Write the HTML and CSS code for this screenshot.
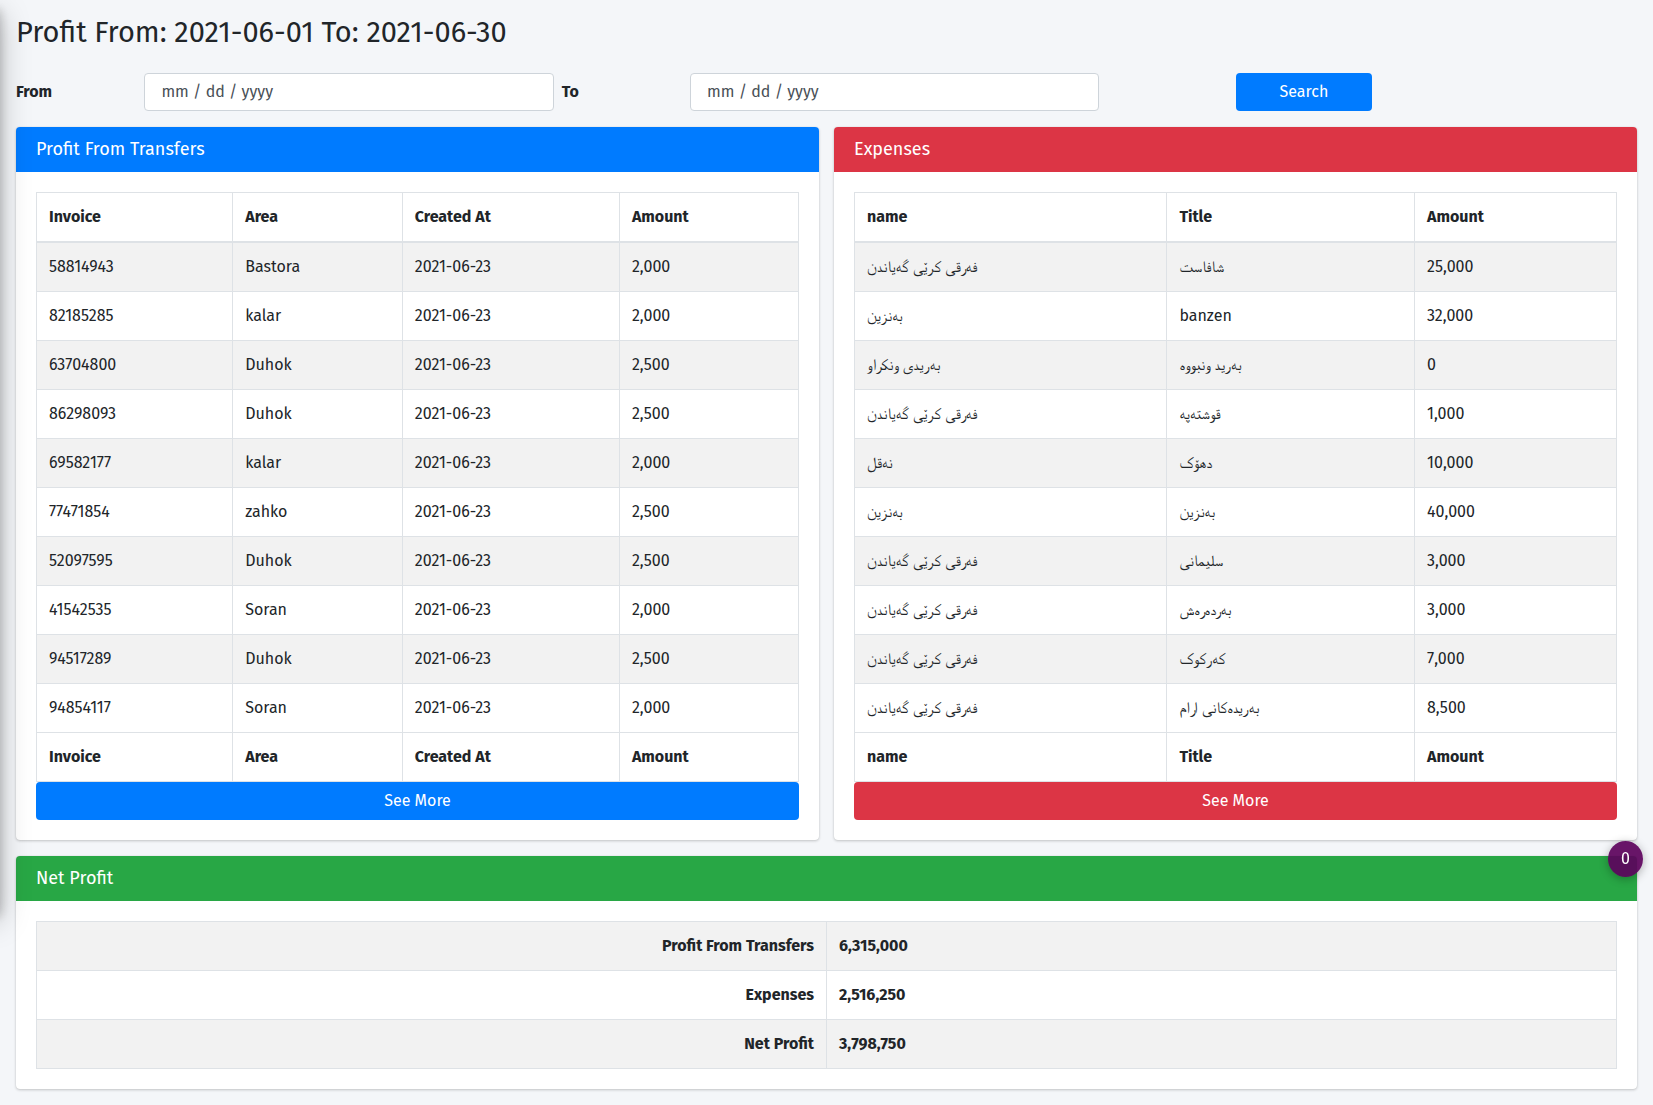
FILE: index.html
```html
<!DOCTYPE html>
<html lang="en">
<head>
  <meta charset="utf-8">
  <meta name="viewport" content="width=device-width, initial-scale=1">
  <title>Profit</title>
  <link rel="stylesheet" href="styles.css">
</head>
<body>
  <aside class="sidebar"></aside>
  <main class="content">
    <h1 class="page-title">Profit From: 2021-06-01 To: 2021-06-30</h1>

    <form class="filters">
      <label class="filter-label" for="from">From</label>
      <input class="filter-input" id="from" name="from" type="text" placeholder="mm / dd / yyyy">
      <label class="filter-label" for="to">To</label>
      <input class="filter-input" id="to" name="to" type="text" placeholder="mm / dd / yyyy">
      <button class="btn btn-primary filter-submit" type="submit">Search</button>
    </form>

    <div class="cards">
      <section class="card">
        <h2 class="card-header header-primary">Profit From Transfers</h2>
        <div class="card-body">
          <table class="table">
            <colgroup><col class="c-invoice"><col class="c-area"><col class="c-created"><col></colgroup>
            <thead>
              <tr><th>Invoice</th><th>Area</th><th>Created At</th><th>Amount</th></tr>
            </thead>
            <tbody>
              <tr><td>58814943</td><td>Bastora</td><td>2021-06-23</td><td>2,000</td></tr>
              <tr><td>82185285</td><td>kalar</td><td>2021-06-23</td><td>2,000</td></tr>
              <tr><td>63704800</td><td>Duhok</td><td>2021-06-23</td><td>2,500</td></tr>
              <tr><td>86298093</td><td>Duhok</td><td>2021-06-23</td><td>2,500</td></tr>
              <tr><td>69582177</td><td>kalar</td><td>2021-06-23</td><td>2,000</td></tr>
              <tr><td>77471854</td><td>zahko</td><td>2021-06-23</td><td>2,500</td></tr>
              <tr><td>52097595</td><td>Duhok</td><td>2021-06-23</td><td>2,500</td></tr>
              <tr><td>41542535</td><td>Soran</td><td>2021-06-23</td><td>2,000</td></tr>
              <tr><td>94517289</td><td>Duhok</td><td>2021-06-23</td><td>2,500</td></tr>
              <tr><td>94854117</td><td>Soran</td><td>2021-06-23</td><td>2,000</td></tr>
            </tbody>
            <tfoot>
              <tr><th>Invoice</th><th>Area</th><th>Created At</th><th>Amount</th></tr>
            </tfoot>
          </table>
          <a class="btn btn-primary btn-block" href="#transfers">See More</a>
        </div>
      </section>

      <section class="card">
        <h2 class="card-header header-danger">Expenses</h2>
        <div class="card-body">
          <table class="table">
            <colgroup><col class="c-name"><col class="c-title"><col></colgroup>
            <thead>
              <tr><th>name</th><th>Title</th><th>Amount</th></tr>
            </thead>
            <tbody>
              <tr><td>فەرقی کرێی گەیاندن</td><td>شافاست</td><td>25,000</td></tr>
              <tr><td>بەنزین</td><td>banzen</td><td>32,000</td></tr>
              <tr><td>بەریدی ونکراو</td><td>بەرید ونبووە</td><td>0</td></tr>
              <tr><td>فەرقی کرێی گەیاندن</td><td>قوشتەپە</td><td>1,000</td></tr>
              <tr><td>نەقل</td><td>دهۆک</td><td>10,000</td></tr>
              <tr><td>بەنزین</td><td>بەنزین</td><td>40,000</td></tr>
              <tr><td>فەرقی کرێی گەیاندن</td><td>سلیمانی</td><td>3,000</td></tr>
              <tr><td>فەرقی کرێی گەیاندن</td><td>بەردەرەش</td><td>3,000</td></tr>
              <tr><td>فەرقی کرێی گەیاندن</td><td>کەرکوک</td><td>7,000</td></tr>
              <tr><td>فەرقی کرێی گەیاندن</td><td>بەریدەکانی ارام</td><td>8,500</td></tr>
            </tbody>
            <tfoot>
              <tr><th>name</th><th>Title</th><th>Amount</th></tr>
            </tfoot>
          </table>
          <a class="btn btn-danger btn-block" href="#expenses">See More</a>
        </div>
      </section>

      <section class="card card-wide">
        <h2 class="card-header header-success">Net Profit</h2>
        <div class="card-body">
          <table class="table summary">
            <tbody>
              <tr><th scope="row">Profit From Transfers</th><td>6,315,000</td></tr>
              <tr><th scope="row">Expenses</th><td>2,516,250</td></tr>
              <tr><th scope="row">Net Profit</th><td>3,798,750</td></tr>
            </tbody>
          </table>
        </div>
      </section>
    </div>
  </main>
  <button class="counter" type="button">0</button>
</body>
</html>
```

FILE: styles.css
```css
*,
*::before,
*::after {
  box-sizing: border-box;
}

body {
  margin: 0;
  background: #f4f6f9;
  color: #212529;
  font-family: "Fira Sans", "Open Sans", FreeSerif, sans-serif;
  font-size: 16px;
  line-height: 24px;
}

/* Collapsed off-canvas menu: only its shadow reaches the page */
.sidebar {
  position: fixed;
  top: 0;
  left: -250px;
  z-index: 10;
  width: 250px;
  height: 82vh;
  box-shadow: 0 14px 28px rgba(0, 0, 0, 0.25), 0 10px 10px rgba(0, 0, 0, 0.22);
}

.content {
  padding: 15px 16px 16px;
}

.page-title {
  margin: 0 0 23px;
  font-size: 29px;
  font-weight: 400;
  line-height: 35px;
}

.filters {
  display: grid;
  grid-template-columns: repeat(12, 1fr);
  align-items: center;
  margin: 0 -8px 16px;
}

.filter-label {
  padding-left: 8px;
  font-weight: 700;
}

.filter-input {
  grid-column: span 3;
  width: 100%;
  height: 38px;
  padding: 5px 16px 7px;
  border: 1px solid #ced4da;
  border-radius: 4px;
  background: #fff;
  color: #495057;
  font: inherit;
}

.filter-input::placeholder {
  color: #495057;
  opacity: 1;
}

.filter-submit {
  grid-column: 10;
}

.btn {
  padding: 7px 12px;
  border: 0;
  border-radius: 4px;
  color: #fff;
  font: inherit;
  text-align: center;
  text-decoration: none;
  cursor: pointer;
}

.btn-primary {
  background: #007bff;
}

.btn-danger {
  background: #dc3545;
}

.btn-block {
  display: block;
}

.cards {
  display: grid;
  grid-template-columns: 1fr 1fr;
  gap: 16px 15px;
}

.card {
  border-radius: 4px;
  background: #fff;
  box-shadow: 0 0 1px rgba(0, 0, 0, 0.125), 0 1px 3px rgba(0, 0, 0, 0.2);
}

.card-wide {
  grid-column: 1 / -1;
}

.card-header {
  margin: 0;
  padding: 10px 20px 11px;
  border-radius: 4px 4px 0 0;
  color: #fff;
  font-size: 18px;
  font-weight: 400;
  line-height: 24px;
}

.header-primary {
  background: #007bff;
}

.header-danger {
  background: #dc3545;
}

.header-success {
  background: #28a745;
}

.card-body {
  padding: 20px;
}

.table {
  width: 100%;
  border-collapse: collapse;
  table-layout: fixed;
}

.table th,
.table td {
  padding: 12px;
  border: 1px solid #dee2e6;
  text-align: left;
}

.table thead th {
  border-bottom-width: 2px;
}

.table tbody tr:nth-child(odd) {
  background: #f2f2f2;
}

.c-invoice { width: 25.75%; }
.c-area { width: 22.25%; }
.c-created { width: 28.5%; }

.c-name { width: 41%; }
.c-title { width: 32.5%; }

.summary th,
.summary td {
  font-weight: 700;
}

.table.summary th {
  text-align: right;
}

.counter {
  position: fixed;
  top: 841px;
  right: 10px;
  z-index: 20;
  width: 35px;
  height: 36px;
  padding: 0;
  border: 0;
  border-radius: 50%;
  background: rgba(92, 3, 92, 0.93);
  box-shadow: 0 2px 10px rgba(0, 0, 0, 0.3);
  color: #fff;
  font: inherit;
  cursor: pointer;
}
```
